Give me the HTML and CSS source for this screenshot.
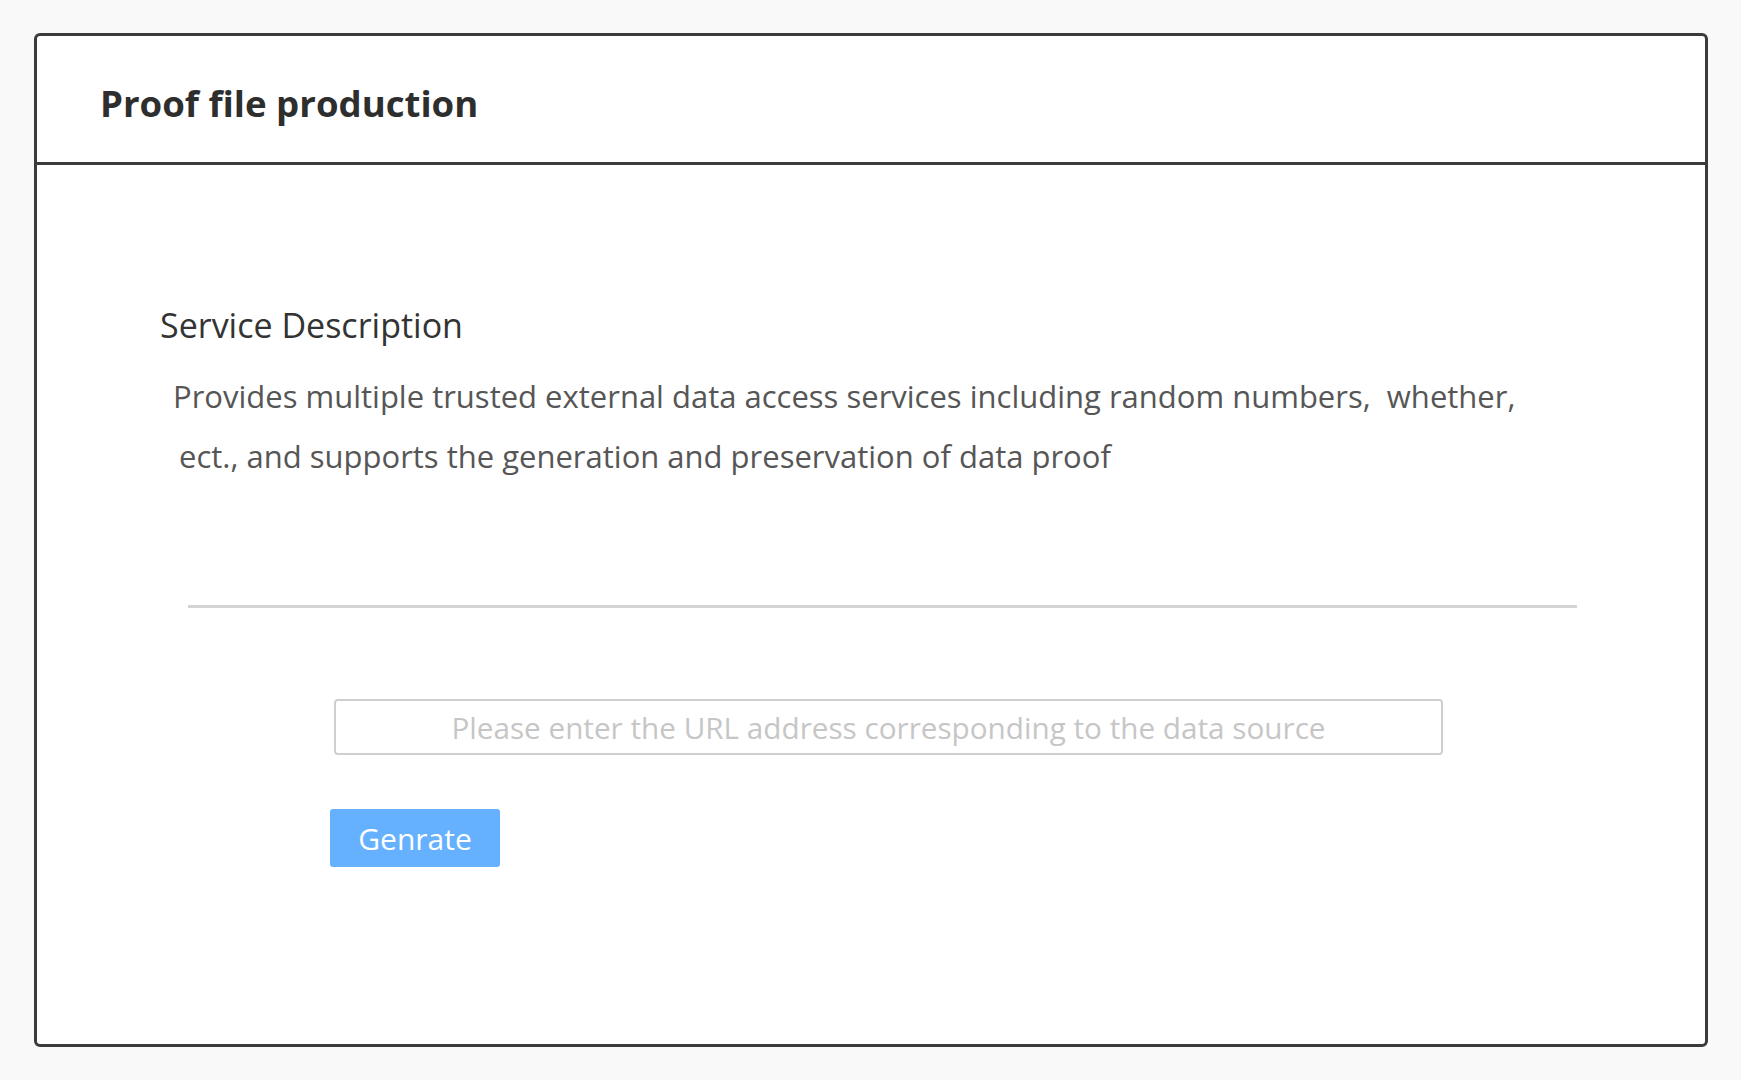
FILE: index.html
```html
<!DOCTYPE html>
<html lang="en">
<head>
<meta charset="utf-8">
<title>Proof file production</title>
<link rel="stylesheet" href="styles.css">
</head>
<body>
  <main class="card">
    <header class="card-header">
      <h1 class="card-title">Proof file production</h1>
    </header>
    <section class="card-body">
      <h2 class="section-title">Service Description</h2>
      <p class="description">
        <span class="desc-line desc-line-1">Provides multiple trusted external data access services including random numbers,&nbsp; whether,</span>
        <span class="desc-line desc-line-2">ect., and supports the generation and preservation of data proof</span>
      </p>
      <hr class="divider">
      <form class="proof-form">
        <input class="url-input" type="text" placeholder="Please enter the URL address corresponding to the data source">
        <button class="btn-generate" type="button">Genrate</button>
      </form>
    </section>
  </main>
</body>
</html>
```
FILE: styles.css
```css
* { box-sizing: border-box; }

html, body {
  margin: 0;
  padding: 0;
  background: #f9f9f9;
}

body {
  font-family: "Open Sans", "Noto Sans", "Liberation Sans", sans-serif;
  padding: 33px 33px 0 34px;
  height: 1080px;
  overflow: hidden;
}

.card {
  width: 1674px;
  height: 1014px;
  background: #fff;
  border: 3px solid #3b3b3b;
  border-radius: 6px;
  display: flex;
  flex-direction: column;
}

.card-header {
  height: 129px;
  border-bottom: 3px solid #3b3b3b;
  display: flex;
  align-items: center;
  padding: 9px 0 0 63px;
}

.card-title {
  margin: 0;
  font-size: 36.6px;
  font-weight: 700;
  color: #2e2e2e;
  line-height: 1;
}

.card-body {
  padding: 138px 0 0 123px;
  display: flex;
  flex-direction: column;
}

.section-title {
  margin: 0;
  font-size: 34px;
  font-weight: 400;
  line-height: 44px;
  color: #333;
}

.description {
  margin: 19px 0 0 0;
  font-size: 31px;
  line-height: 60px;
  color: #565656;
}

.desc-line {
  display: block;
  white-space: nowrap;
}

.desc-line-1 { padding-left: 13px; }
.desc-line-2 { padding-left: 19px; }

.divider {
  margin: 119px 0 0 28px;
  width: 1389px;
  height: 3px;
  border: 0;
  background: #d4d4d4;
}

.proof-form {
  display: flex;
  flex-direction: column;
  align-items: flex-start;
  padding-left: 174px;
}

.url-input {
  margin-top: 91px;
  width: 1109px;
  height: 56px;
  border: 2px solid #cfcfcf;
  border-radius: 4px;
  font-family: inherit;
  font-size: 29.7px;
  text-align: center;
  color: #333;
  outline: none;
  background: #fff;
}

.url-input::placeholder {
  color: #c6c6c6;
}

.btn-generate {
  margin: 54px 0 0 -4px;
  width: 170px;
  height: 58px;
  border: 0;
  border-radius: 3px;
  background: #66b1ff;
  color: #fff;
  font-family: inherit;
  font-size: 30px;
  padding: 0;
}
```
